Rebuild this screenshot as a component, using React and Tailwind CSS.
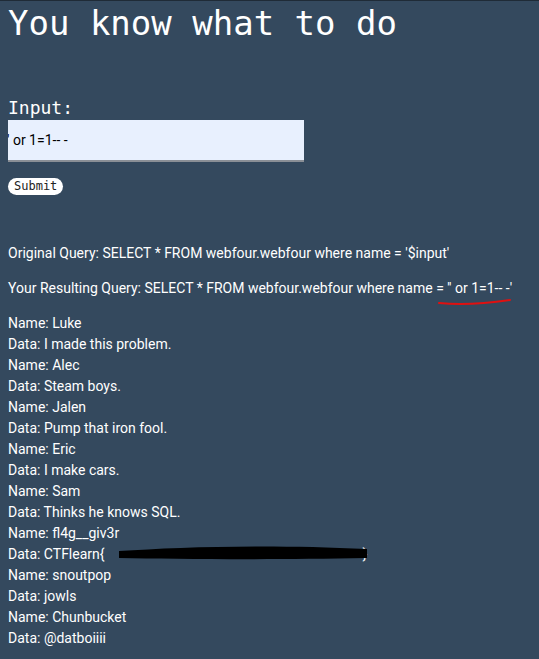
import React from "react";

const rows = [
  ["Name", "Luke"],
  ["Data", "I made this problem."],
  ["Name", "Alec"],
  ["Data", "Steam boys."],
  ["Name", "Jalen"],
  ["Data", "Pump that iron fool."],
  ["Name", "Eric"],
  ["Data", "I make cars."],
  ["Name", "Sam"],
  ["Data", "Thinks he knows SQL."],
  ["Name", "fl4g__giv3r"],
  ["Data", "FLAG"],
  ["Name", "snoutpop"],
  ["Data", "jowls"],
  ["Name", "Chunbucket"],
  ["Data", "@datboiiii"],
];

export default function App() {
  return (
    <div className="min-h-[659px] w-full bg-[#34495e] border-t border-[#1f2b37] text-white overflow-hidden">
      <div className="px-2">
        <h1 className="text-[34px] leading-[44px] pt-0 font-['DejaVu_Sans_Mono',monospace] text-white">
          You know what to do
        </h1>
        <div className="mt-[52px] text-[18px] leading-[22px] font-['DejaVu_Sans_Mono',monospace]">Input:</div>
        <div className="mt-[1px] w-[296px] h-[42px] bg-[#e8f0fe] border-b-2 border-[#8a8f96] overflow-hidden flex items-center">
          <span className="ml-[-1px] text-[14px] text-black font-['Roboto',sans-serif] whitespace-pre">' or 1=1-- -</span>
        </div>
        <button className="mt-[16px] block bg-white text-[#222] rounded-full px-[6px] h-[17px] text-[12px] leading-[17px] font-['DejaVu_Sans_Mono',monospace]">
          Submit
        </button>
        <div className="mt-[48px] font-['Roboto',sans-serif] text-[14px] leading-[21px]">
          <p>Original Query: SELECT * FROM webfour.webfour where name = '$input'</p>
          <p className="mt-[14px] relative inline-block">
            Your Resulting Query: SELECT * FROM webfour.webfour where name = '' or 1=1-- -'
            <svg className="absolute left-[430px] top-[19px]" width="76" height="10" viewBox="0 0 76 10">
              <path d="M1 6 C 20 8, 45 7, 72 3" stroke="#e01010" strokeWidth="2" fill="none" strokeLinecap="round" />
            </svg>
          </p>
          <div className="mt-[14px] relative">
            {rows.map(([k, v], i) =>
              v === "FLAG" ? (
                <p key={i} className="whitespace-nowrap">
                  Data: CTFlearn{"{"}
                  <span className="inline-block w-[258px] h-[1px]" />
                  {"}"}
                </p>
              ) : (
                <p key={i}>
                  {k}: {v}
                </p>
              )
            )}
            <svg className="absolute left-[110px] top-[228px]" width="250" height="20" viewBox="0 0 250 20">
              <path d="M1 10 C 60 6, 150 3, 249 8 L 249 17 C 150 19, 60 18, 1 17 Z" fill="#000" />
            </svg>
          </div>
        </div>
      </div>
    </div>
  );
}
